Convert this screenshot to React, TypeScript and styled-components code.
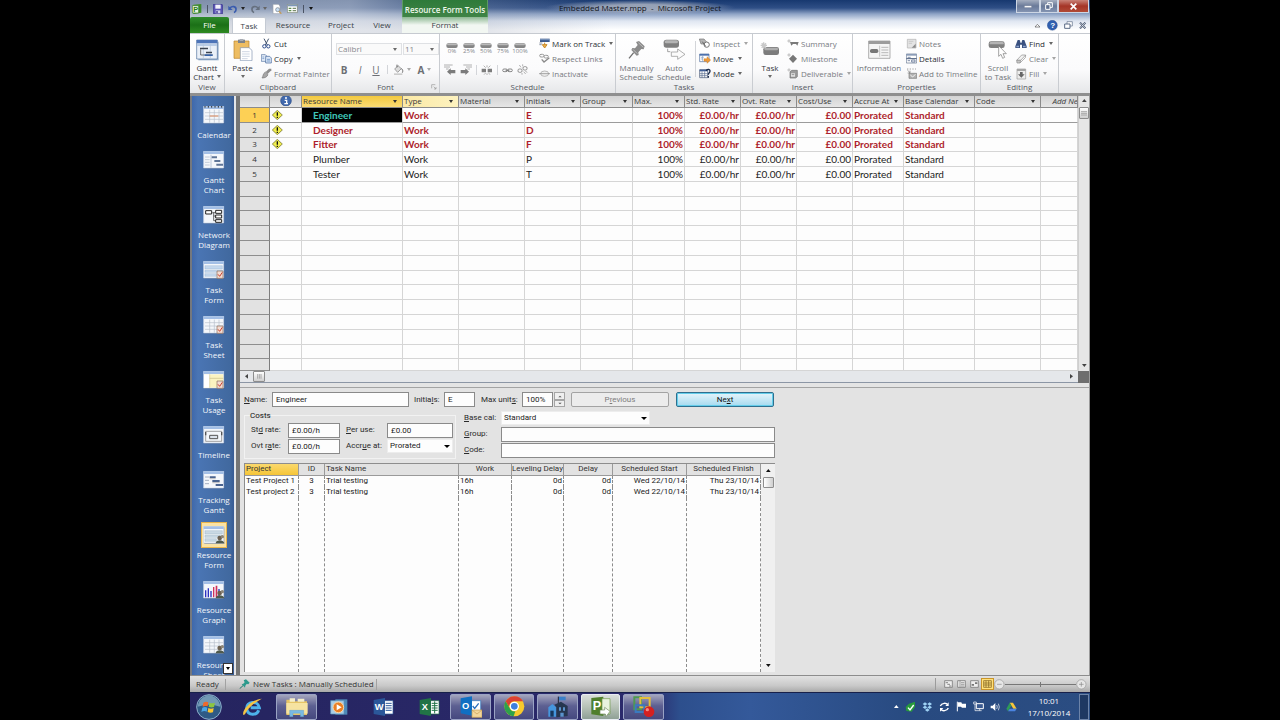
import React from "react";
import styled, { createGlobalStyle, css } from "styled-components";

const UI = `"Open Sans", "Noto Sans", sans-serif`;
const FORM = `Roboto, "Liberation Sans", sans-serif`;
const GRID = `Lato, "Open Sans", sans-serif`;

const GlobalStyle = createGlobalStyle`
  * { box-sizing: border-box; }
  html, body { margin: 0; background: #000; }
  body { font-family: ${UI}; font-size: 8px; line-height: 10px; color: #222; }
  button, input, select { font: inherit; color: inherit; margin: 0; padding: 0; border: 0; border-radius: 0; background: none; outline: none; }
  svg { display: block; flex: none; }
`;

const Stage = styled.div`
  display: flex;
  flex-direction: column;
  height: 100vh;
  min-height: 600px;
  padding: 0 190px;
  overflow: hidden;
`;

/* ---------- icons ---------- */

type IconProps = { w: number; h: number; children: React.ReactNode };
const Icon = ({ w, h, children }: IconProps) => (
  <svg width={w} height={h} viewBox={`0 0 ${w * 3} ${h * 3}`} aria-hidden="true">{children}</svg>
);

const Caret = styled.i<{ $color?: string }>`
  flex: none;
  width: 0;
  height: 0;
  border: 2px solid transparent;
  border-top: 3px solid ${p => p.$color || "#6a6a6a"};
  border-bottom: 0;
`;

const ProjectLogo = () => (
  <Icon w={10} h={10}>
    <path d="M4 2L28 0V26L4 30Z" fill="#3f8f2a" />
    <path d="M1 5H20V27H1Z" fill="#e9f3df" stroke="#2f7a1c" strokeWidth="2" />
    <text x="4" y="24" fontSize="22" fontWeight="700" fill="#2b7a18" fontFamily="Liberation Sans">P</text>
  </Icon>
);
const SaveIcon = () => (
  <Icon w={10} h={10}>
    <path d="M1 1H27L29 3V29H1Z" fill="#5b56b5" stroke="#35318a" strokeWidth="2" />
    <path d="M7 2H23V14H7Z" fill="#f2f3fb" />
    <path d="M8 19H22V28H8Z" fill="#cfd0ea" />
    <path d="M10 21H14V28H10Z" fill="#35318a" />
  </Icon>
);
const UndoIcon = ({ color, flip }: { color: string; flip?: boolean }) => (
  <Icon w={10} h={10}>
    <g transform={flip ? "translate(30 0) scale(-1 1)" : undefined}>
      <path d="M6 12C12 5 25 6 24 17C24 21 21 24 18 26" fill="none" stroke={color} strokeWidth="5" />
      <path d="M1 5V18H14Z" fill={color} />
    </g>
  </Icon>
);
const PreviewIcon = () => (
  <Icon w={10} h={10}>
    <path d="M3 1H19L24 6V29H3Z" fill="#fff" stroke="#9aa0aa" strokeWidth="2" />
    <circle cx="17" cy="17" r="6" fill="#c9e0f5" stroke="#6d7782" strokeWidth="2" />
    <path d="M21 22L28 29" stroke="#c49a56" strokeWidth="4" />
  </Icon>
);
const ViewTableIcon = () => (
  <Icon w={11} h={9}>
    <path d="M1 1H31V26H1Z" fill="#fff" stroke="#6f7a68" strokeWidth="2" />
    <path d="M2 2H30V7H2Z" fill="#7d97b8" />
    <path d="M5 11H13V15H5ZM5 18H13V22H5Z" fill="#5c8f4c" />
    <path d="M17 11H27V15H17ZM17 18H27V22H17Z" fill="#7c8f6f" />
  </Icon>
);

const GanttBig = () => (
  <Icon w={23} h={22}>
    <path d="M7 8H68V64H7Z" fill="#9db4cf" />
    <path d="M2 3H64V60H2Z" fill="#eaf0f8" stroke="#4f6f9d" strokeWidth="2" />
    <path d="M2 3H64V13H2Z" fill="#4d74b8" />
    <path d="M3 14H63V21H3Z" fill="#b9cce6" />
    <path d="M22 14V59M43 14V59" stroke="#b5c5da" strokeWidth="2" />
    <path d="M12 26H36V31H12ZM30 38H48V43H30Z" fill="#3d4450" />
    <path d="M14 31V48H50" stroke="#333" strokeWidth="2" fill="none" />
    <path d="M26 46H50V51H26Z" fill="#3863a8" />
  </Icon>
);
const PasteBig = () => (
  <Icon w={20} h={22}>
    <path d="M3 6H48V58H3Z" fill="#eebd62" stroke="#b9822c" strokeWidth="2" />
    <path d="M15 2H36V12H15Z" fill="#7d828a" />
    <path d="M20 0H31V6H20Z" fill="#a7abb2" />
    <path d="M22 26H48L57 34V65H22Z" fill="#fff" stroke="#7e93b0" strokeWidth="2" />
    <path d="M27 38H50M27 45H50M27 52H50M27 59H44" stroke="#b7c3d4" strokeWidth="2" />
  </Icon>
);
const CutIcon = () => (
  <Icon w={11} h={11}>
    <path d="M9 2L19 21M23 2L13 21" stroke="#44546e" strokeWidth="3" />
    <circle cx="10" cy="25" r="5" fill="none" stroke="#2b4a8c" strokeWidth="3" />
    <circle cx="22" cy="25" r="5" fill="none" stroke="#2b4a8c" strokeWidth="3" />
  </Icon>
);
const CopyIcon = () => (
  <Icon w={11} h={11}>
    <path d="M1 5H13L17 9V25H1Z" fill="#eaf1fa" stroke="#4c6c9d" strokeWidth="2" />
    <path d="M14 10H26L31 15V30H14Z" fill="#dce8f7" stroke="#3c5f97" strokeWidth="2" />
    <path d="M18 19H27M18 24H27M4 12H10M4 17H10" stroke="#4a78ba" strokeWidth="2" />
  </Icon>
);
const PainterIcon = () => (
  <Icon w={11} h={11}>
    <path d="M31 2L24 2L14 12L20 18L31 7Z" fill="#8d8d8d" />
    <path d="M13 12L21 20C18 27 12 30 3 30C7 25 5 17 13 12Z" fill="#a7a7a7" stroke="#7a7a7a" strokeWidth="2" />
  </Icon>
);
const BucketIcon = () => (
  <Icon w={11} h={11}>
    <path d="M5 15L15 5L25 14L14 25Z" fill="#ddd" stroke="#777" strokeWidth="2" />
    <path d="M12 10V2M25 14C30 16 30 22 28 26" stroke="#666" strokeWidth="3" fill="none" />
    <path d="M3 28H28V33H3Z" fill="#ccc" />
  </Icon>
);
const Pill = () => (
  <Icon w={12} h={5}>
    <rect x="1" y="1" width="34" height="14" rx="6" fill="#858585" />
    <rect x="3" y="2" width="30" height="5" rx="3" fill="#b9b9b9" />
  </Icon>
);
const IndentIcon = ({ flip }: { flip?: boolean }) => (
  <Icon w={12} h={11}>
    <g transform={flip ? "translate(36 0) scale(-1 1)" : undefined}>
      <path d="M0 3H26M0 9H18M6 15H14" stroke="#8d8d8d" strokeWidth="2" />
      <path d="M9 23L20 13V18H34V28H20V33Z" fill="#7b7b7b" />
    </g>
  </Icon>
);
const SplitIcon = () => (
  <Icon w={12} h={10}>
    <path d="M2 11H15V22H2ZM20 11H33V22H20Z" fill="#7d7d7d" />
    <path d="M14 8L8 2M18 7V1M22 8L28 2M14 24L9 29M18 25V30M22 24L28 29" stroke="#8c8c8c" strokeWidth="2" />
  </Icon>
);
const LinkIcon = () => (
  <Icon w={11} h={10}>
    <rect x="2" y="12" width="14" height="8" rx="4" fill="none" stroke="#8a8a8a" strokeWidth="3" />
    <rect x="17" y="12" width="14" height="8" rx="4" fill="none" stroke="#8a8a8a" strokeWidth="3" />
    <path d="M11 16H22" stroke="#777" strokeWidth="3" />
  </Icon>
);
const UnlinkIcon = () => (
  <Icon w={11} h={11}>
    <rect x="3" y="15" width="12" height="10" rx="4" fill="none" stroke="#909090" strokeWidth="3" />
    <rect x="18" y="8" width="12" height="10" rx="4" fill="none" stroke="#909090" strokeWidth="3" />
    <path d="M12 10L7 3M17 7V1M20 23L26 30M15 27V32M25 22L31 25" stroke="#8c8c8c" strokeWidth="2" />
  </Icon>
);
const MarkIcon = () => (
  <Icon w={11} h={11}>
    <path d="M3 2H32V12H3Z" fill="#3d5a8d" />
    <path d="M3 5H32" stroke="#9fb6d8" strokeWidth="2" />
    <path d="M17 14V20M10 20L17 30L24 20Z" stroke="#c98a2a" strokeWidth="3" fill="#f0b650" />
    <path d="M1 15H10M1 20H8" stroke="#56657c" strokeWidth="2" />
  </Icon>
);
const RespectIcon = () => (
  <Icon w={11} h={11}>
    <rect x="2" y="4" width="13" height="8" rx="4" fill="none" stroke="#999" strokeWidth="3" />
    <rect x="15" y="7" width="13" height="8" rx="4" fill="none" stroke="#999" strokeWidth="3" />
    <path d="M8 19L15 27L31 14" stroke="#8a8a8a" strokeWidth="4" fill="none" />
  </Icon>
);
const InactivateIcon = () => (
  <Icon w={11} h={11}>
    <ellipse cx="17" cy="17" rx="12" ry="8" fill="#f0f0f0" stroke="#9b9b9b" strokeWidth="2" />
    <path d="M0 17H33" stroke="#7b7b7b" strokeWidth="2" />
  </Icon>
);
const PinBig = () => (
  <Icon w={18} h={20}>
    <path d="M24 6L33 3L50 19L47 28L40 27L31 37L32 45L26 47L10 30L13 24L21 25L29 15Z" fill="#8b8b8b" />
    <path d="M31 8L46 22M15 28L28 41" stroke="#bdbdbd" strokeWidth="3" />
    <path d="M17 38L3 55" stroke="#6f6f6f" strokeWidth="4" />
  </Icon>
);
const AutoBig = () => (
  <Icon w={23} h={21}>
    <rect x="2" y="2" width="46" height="24" rx="8" fill="#7f7f7f" />
    <rect x="5" y="4" width="40" height="9" rx="5" fill="#b4b4b4" />
    <path d="M14 29V38H22" stroke="#777" strokeWidth="2" fill="none" />
    <path d="M25 39H44V30L66 46L44 61V52H25Z" fill="#fbfbfb" stroke="#8b8b8b" strokeWidth="2" />
  </Icon>
);
const InspectIcon = () => (
  <Icon w={12} h={11}>
    <path d="M1 3H15L22 11L15 18H6Z" fill="#b3b3b3" stroke="#777" strokeWidth="2" />
    <circle cx="23" cy="20" r="8" fill="none" stroke="#777" strokeWidth="3" />
    <path d="M10 11L20 25" stroke="#666" strokeWidth="3" />
  </Icon>
);
const MoveIcon = () => (
  <Icon w={12} h={11}>
    <path d="M2 3H30V26H2Z" fill="#fff" stroke="#49689b" strokeWidth="2" />
    <path d="M2 3H30V8H2Z" fill="#4c70ad" />
    <path d="M6 13H14M6 18H12M11 8V26" stroke="#7d98c2" strokeWidth="2" />
    <path d="M15 17H24V11L35 21L24 31V25H15Z" fill="#ee9a3a" stroke="#c26c10" />
  </Icon>
);
const ModeIcon = () => (
  <Icon w={12} h={11}>
    <path d="M2 5H26V29H2Z" fill="#fff" stroke="#3c4d6e" strokeWidth="2" />
    <path d="M2 5H26V10H2Z" fill="#3f5e97" />
    <path d="M2 17H26M2 23H26M9 10V29M17 10V29" stroke="#56698c" strokeWidth="2" />
    <path d="M22 9C23 2 34 3 33 10C33 14 28 15 28 20M28 24V29" stroke="#1c2c4b" strokeWidth="4" fill="none" />
  </Icon>
);
const TaskBig = () => (
  <Icon w={20} h={18}>
    <rect x="10" y="18" width="47" height="24" rx="7" fill="#7c7c7c" />
    <rect x="13" y="20" width="41" height="8" rx="4" fill="#adadad" />
    <path d="M11 4V23M2 13H21M5 7L18 20M18 7L5 20" stroke="#c9c9c9" strokeWidth="4" />
  </Icon>
);
const SummaryIcon = () => (
  <Icon w={12} h={11}>
    <path d="M9 12H35L31 23L27 18H18L13 23Z" fill="#7a7a7a" />
    <path d="M6 4V14M1 9H11" stroke="#bbb" strokeWidth="3" />
  </Icon>
);
const MilestoneIcon = () => (
  <Icon w={12} h={11}>
    <path d="M18 5L30 17L18 30L6 17Z" fill="#777" />
    <path d="M6 1V11M1 6H11" stroke="#bbb" strokeWidth="3" />
  </Icon>
);
const DeliverableIcon = () => (
  <Icon w={12} h={11}>
    <path d="M9 12L14 7H31V26L26 30H9Z" fill="#9b9b9b" stroke="#707070" strokeWidth="2" />
    <path d="M12 16H24V26H12Z" fill="#e8e8e8" />
    <path d="M14 20H22" stroke="#666" strokeWidth="2" />
    <path d="M6 1V11M1 6H11" stroke="#bbb" strokeWidth="3" />
  </Icon>
);
const InfoBig = () => (
  <Icon w={23} h={19}>
    <path d="M2 3H66V55H2Z" fill="#f5f5f5" stroke="#8b8b8b" strokeWidth="2" />
    <path d="M2 3H66V12H2Z" fill="#9c9c9c" />
    <rect x="6" y="27" width="25" height="12" rx="5" fill="#777" />
    <path d="M35 17V50" stroke="#aaa" strokeWidth="2" />
    <path d="M40 22H61M40 30H61M40 38H61M40 46H61" stroke="#999" strokeWidth="2" />
  </Icon>
);
const NotesIcon = () => (
  <Icon w={11} h={11}>
    <path d="M4 4H30V30H4Z" fill="#e4e4e4" stroke="#b0b0b0" strokeWidth="2" />
    <path d="M17 29H29V17Z" fill="#8a8a8a" />
    <path d="M8 10H22M8 16H18" stroke="#bbb" strokeWidth="2" />
  </Icon>
);
const DetailsIcon = () => (
  <Icon w={11} h={11}>
    <path d="M1 3H32V30H1Z" fill="#fff" stroke="#5b6d89" strokeWidth="2" />
    <path d="M1 3H32V8H1Z" fill="#8b9cb8" />
    <path d="M1 17H32" stroke="#47597a" strokeWidth="3" />
    <path d="M5 13H14M5 23H12" stroke="#3f547c" strokeWidth="2" />
    <path d="M17 21H27V27H17Z" fill="none" stroke="#3f547c" strokeWidth="2" />
  </Icon>
);
const TimelineAddIcon = () => (
  <Icon w={11} h={11}>
    <path d="M3 3H30" stroke="#777" strokeWidth="2" strokeDasharray="4 4" />
    <path d="M4 6L12 14M12 8V15H5" stroke="#777" strokeWidth="2" fill="none" />
    <path d="M9 16H32V31H9Z" fill="#b1b1b1" stroke="#787878" strokeWidth="2" />
    <path d="M13 21L20 27L28 19" stroke="#f4f4f4" strokeWidth="3" fill="none" />
  </Icon>
);
const ScrollBig = () => (
  <Icon w={20} h={19}>
    <rect x="2" y="4" width="48" height="20" rx="7" fill="#808080" />
    <rect x="5" y="6" width="42" height="7" rx="4" fill="#b4b4b4" />
    <path d="M32 17V49L39 43L44 55L50 52L45 41H55Z" fill="#fff" stroke="#777" strokeWidth="2" />
  </Icon>
);
const FindIcon = () => (
  <Icon w={12} h={10}>
    <path d="M8 3H14L17 12L19 12L22 3H28L35 22V27H21V17H15V27H1V22Z" fill="#3a5180" />
    <path d="M4 20H12V25H4ZM24 20H32V25H24Z" fill="#8fa6cf" />
  </Icon>
);
const ClearIcon = () => (
  <Icon w={11} h={10}>
    <path d="M2 19L17 3H29L14 19Z" fill="#f3f3f3" stroke="#8d8d8d" strokeWidth="2" />
    <path d="M2 19H14L12 27H3Z" fill="#c9c9c9" stroke="#8d8d8d" strokeWidth="2" />
    <path d="M12 27L28 11L29 3" fill="none" stroke="#8d8d8d" strokeWidth="2" />
  </Icon>
);
const FillIcon = () => (
  <Icon w={11} h={12}>
    <path d="M3 3H29V33H3Z" fill="#ececec" stroke="#999" strokeWidth="2" />
    <path d="M3 3H29V9H3Z" fill="#a5a5a5" />
    <path d="M12 12H20V19H26L16 29L6 19H12Z" fill="#666" />
  </Icon>
);

/* ---------- title bar and tabs ---------- */

const Header = styled.header`
  position: relative;
  flex: none;
  background:
    linear-gradient(to right, rgba(196, 200, 208, 0.6) 0, rgba(205, 210, 220, 0.6) 160px, rgba(150, 160, 180, 0.35) 260px, rgba(255, 255, 255, 0) 420px),
    linear-gradient(to bottom, #17386f 0, #2f4f86 8px, #8fa4c6 14px, #dfe6f1 21px, #fff 30px);
`;
const TitleRow = styled.div`
  display: flex;
  height: 17px;
`;
const QuickAccess = styled.div`
  display: flex;
  align-items: center;
  gap: 5px;
  width: 212px;
  padding: 0 2px;
`;
const QatButton = styled.button`
  display: flex;
  align-items: center;
  gap: 3px;
`;
const QatRule = styled.span`
  width: 1px;
  height: 8px;
  background: #4a5364;
`;
const ContextTitle = styled.div`
  width: 86px;
  padding-top: 5px;
  text-align: center;
  white-space: nowrap;
  font-weight: 600;
  color: #eef7ea;
  background: linear-gradient(to bottom, #2e7a3a, #3f8446);
  border: solid #5d9a63;
  border-width: 0 1px;
`;
const WindowTitle = styled.div`
  position: absolute;
  inset: 3px 0 auto;
  text-align: center;
  color: #10131a;
  pointer-events: none;
  span {
    padding: 2px 14px;
    background: radial-gradient(closest-side, rgba(178, 184, 196, 0.8) 40%, rgba(170, 178, 192, 0));
  }
`;
const WindowButtons = styled.div`
  display: flex;
  height: 13px;
  margin-left: auto;
  padding-right: 1px;
`;
const WindowButton = styled.button<{ $w: number; $close?: boolean }>`
  display: flex;
  align-items: center;
  justify-content: center;
  width: ${p => p.$w}px;
  border: 1px solid #cdd6e4;
  border-top: 0;
  background: ${p => (p.$close ? "linear-gradient(to bottom, #c98378, #a53527 50%, #b04a36)" : "linear-gradient(to bottom, #a6afc0, #6a7a99 50%, #8494b2)")};
`;
const TabRow = styled.nav`
  display: flex;
  height: 16px;
  align-items: stretch;
`;
const Tab = styled.button<{ $w: number; $kind?: "file" | "active" | "context" }>`
  width: ${p => p.$w}px;
  text-align: center;
  color: #3a3f48;
  ${p => p.$kind === "file" && css`
    margin-right: 3px;
    color: #fff;
    border-radius: 2px 2px 0 0;
    background: linear-gradient(to bottom, #2f8b2b, #1b7017 50%, #2f8a22);
  `}
  ${p => p.$kind === "active" && css`
    background: #fff;
    border: 1px solid #c4cad3;
    border-bottom: 0;
    border-radius: 2px 2px 0 0;
  `}
  ${p => p.$kind === "context" && css`
    background: linear-gradient(to bottom, #8db893, #f2f7f2 50%);
  `}
`;
const TabTools = styled.div`
  display: flex;
  align-items: center;
  gap: 6px;
  margin-left: auto;
  padding-right: 3px;
`;
const PlainButton = styled.button`
  display: flex;
  align-items: center;
`;

const TitleBar = () => (
  <Header>
    <TitleRow>
      <QuickAccess>
        <ProjectLogo />
        <QatRule />
        <QatButton aria-label="Save"><SaveIcon /></QatButton>
        <QatButton aria-label="Undo"><UndoIcon color="#3a5cae" /><Caret $color="#222" /></QatButton>
        <QatButton aria-label="Redo"><UndoIcon color="#66707f" flip /><Caret $color="#666" /></QatButton>
        <QatButton aria-label="Print preview"><PreviewIcon /></QatButton>
        <QatButton aria-label="View"><ViewTableIcon /></QatButton>
        <QatRule />
        <QatButton aria-label="Customize"><Caret $color="#111" /></QatButton>
      </QuickAccess>
      <ContextTitle>Resource Form Tools</ContextTitle>
      <WindowButtons>
        <WindowButton $w={24} aria-label="Minimize"><Icon w={8} h={3}><path d="M1 2H23V8H1Z" fill="#fff" stroke="#44526d" /></Icon></WindowButton>
        <WindowButton $w={18} aria-label="Restore">
          <Icon w={8} h={8}><path d="M8 2H22V16H8Z" fill="none" stroke="#fff" strokeWidth="3" /><path d="M2 8H15V22H2Z" fill="#5e6f90" stroke="#fff" strokeWidth="3" /></Icon>
        </WindowButton>
        <WindowButton $w={31} $close aria-label="Close"><Icon w={7} h={7}><path d="M2 2L19 19M19 2L2 19" stroke="#fff" strokeWidth="5" /></Icon></WindowButton>
      </WindowButtons>
    </TitleRow>
    <WindowTitle><span>Embedded Master.mpp&nbsp; -&nbsp; Microsoft Project</span></WindowTitle>
    <TabRow>
      <Tab $w={39} $kind="file">File</Tab>
      <Tab $w={34} $kind="active">Task</Tab>
      <Tab $w={54}>Resource</Tab>
      <Tab $w={42}>Project</Tab>
      <Tab $w={40}>View</Tab>
      <Tab $w={86} $kind="context">Format</Tab>
      <TabTools>
        <PlainButton aria-label="Collapse ribbon"><Icon w={7} h={5}><path d="M3 12L10 4L18 12Z" fill="#fff" stroke="#555" strokeWidth="2" /></Icon></PlainButton>
        <PlainButton aria-label="Help">
          <Icon w={11} h={11}>
            <circle cx="16" cy="16" r="15" fill="#2f5fb0" stroke="#1f3f80" />
            <text x="10" y="25" fontSize="24" fontWeight="700" fill="#fff" fontFamily="Liberation Sans">?</text>
          </Icon>
        </PlainButton>
        <PlainButton aria-label="Restore document"><Icon w={9} h={8}><path d="M9 2H25V15H9Z" fill="#fff" stroke="#5b6b85" strokeWidth="2" /><path d="M2 9H18V22H2Z" fill="#fff" stroke="#5b6b85" strokeWidth="3" /></Icon></PlainButton>
        <PlainButton aria-label="Close document"><Icon w={8} h={7}><path d="M3 2L19 19M19 2L3 19" stroke="#43536e" strokeWidth="6" /><path d="M3 2L19 19M19 2L3 19" stroke="#fff" strokeWidth="2" /></Icon></PlainButton>
      </TabTools>
    </TabRow>
  </Header>
);

/* ---------- ribbon ---------- */

const RibbonBar = styled.div`
  display: flex;
  flex: none;
  height: 63px;
  overflow: hidden;
  border-top: 1px solid #c6cad0;
  border-bottom: 3px solid #8f8f8f;
  background: linear-gradient(to bottom, #fff 0, #fbfbfc 60%, #e6e7e9 100%);
`;
const Group = styled.section<{ $w: number }>`
  display: flex;
  flex-direction: column;
  flex: none;
  width: ${p => p.$w}px;
  border-right: 1px solid #c9ccd1;
`;
const GroupBody = styled.div`
  display: flex;
  flex: 1;
  padding-top: 2px;
`;
const GroupLabel = styled.div`
  display: flex;
  justify-content: center;
  position: relative;
  height: 11px;
  color: #54585f;
  svg { position: absolute; right: 2px; top: 2px; }
`;
const BigButton = styled.button<{ $w: number; $dim?: boolean }>`
  display: flex;
  flex-direction: column;
  align-items: center;
  flex: none;
  width: ${p => p.$w}px;
  height: 46px;
  line-height: 9px;
  white-space: nowrap;
  color: ${p => (p.$dim ? "#6f7277" : "#33363b")};
  > span:first-child {
    display: flex;
    align-items: center;
    height: 27px;
  }
  > span:nth-child(2) { text-align: center; }
  > i { margin-top: 3px; }
`;
const Stack = styled.div`
  display: flex;
  flex-direction: column;
`;
const SmallButton = styled.button<{ $dim?: boolean }>`
  display: flex;
  align-items: center;
  gap: 2px;
  height: 15px;
  white-space: nowrap;
  color: ${p => (p.$dim ? "#777a7f" : "#2a2d33")};
  > span:first-child {
    display: flex;
    justify-content: center;
    width: 12px;
  }
  > i { margin-left: 2px; }
`;
const Small = ({ icon, label, dim, menu }: { icon: React.ReactNode; label: string; dim?: boolean; menu?: boolean }) => (
  <SmallButton $dim={dim}>
    <span>{icon}</span>
    <span>{label}</span>
    {menu && <Caret $color={dim ? "#a5a5a5" : "#666"} />}
  </SmallButton>
);
const InlineCaret = styled(Caret)`
  display: inline-block;
  margin: 0 0 2px 3px;
`;
const FontTools = styled.div`
  padding: 7px 0 0 4px;
`;
const ComboRow = styled.div`
  display: flex;
  gap: 1px;
`;
const Combo = styled.span<{ $w: number }>`
  position: relative;
  width: ${p => p.$w}px;
  height: 12px;
  border: 1px solid #dfe1e4;
  background: #fafafa;
  color: #85888d;
  select {
    display: block;
    appearance: none;
    width: 100%;
    height: 10px;
    line-height: 10px;
    padding-left: 1px;
  }
  i { position: absolute; right: 4px; top: 4px; pointer-events: none; }
`;
const FormatRow = styled.div`
  display: flex;
  align-items: center;
  height: 13px;
  margin-top: 8px;
  color: #6d6f74;
`;
const FormatButton = styled.button<{ $w?: number }>`
  display: flex;
  align-items: center;
  justify-content: center;
  gap: 3px;
  width: ${p => p.$w || 16}px;
  font-size: 10px;
`;
const Rule = styled.span<{ $h: number }>`
  flex: none;
  width: 1px;
  height: ${p => p.$h}px;
  background: #d3d5d9;
`;
const ScheduleTools = styled.div`
  display: flex;
  flex-direction: column;
  gap: 9px;
  width: 98px;
  padding: 7px 10px 0 4px;
`;
const ToolRow = styled.div`
  display: flex;
  align-items: center;
  justify-content: space-between;
`;
const PercentButton = styled.button`
  display: flex;
  flex-direction: column;
  align-items: center;
  width: 16px;
  font-size: 6px;
  line-height: 7px;
  color: #85888d;
`;

const Ribbon = () => (
  <RibbonBar>
    <Group $w={35}>
      <GroupBody><BigButton $w={34}><span><GanttBig /></span><span>Gantt<br />Chart<InlineCaret /></span></BigButton></GroupBody>
      <GroupLabel>View</GroupLabel>
    </Group>
    <Group $w={107}>
      <GroupBody>
        <BigButton $w={35}><span><PasteBig /></span><span>Paste</span><Caret /></BigButton>
        <Stack>
          <Small icon={<CutIcon />} label="Cut" />
          <Small icon={<CopyIcon />} label="Copy" menu />
          <Small icon={<PainterIcon />} label="Format Painter" dim />
        </Stack>
      </GroupBody>
      <GroupLabel>Clipboard</GroupLabel>
    </Group>
    <Group $w={108}>
      <GroupBody>
        <FontTools>
          <ComboRow>
            <Combo $w={66}><select aria-label="Font"><option>Calibri</option></select><Caret /></Combo>
            <Combo $w={36}><select aria-label="Font size"><option>11</option></select><Caret /></Combo>
          </ComboRow>
          <FormatRow>
            <FormatButton aria-label="Bold"><b>B</b></FormatButton>
            <FormatButton aria-label="Italic"><em>I</em></FormatButton>
            <FormatButton aria-label="Underline"><u>U</u></FormatButton>
            <FormatButton $w={6} as="span"><Rule $h={9} /></FormatButton>
            <FormatButton $w={23} aria-label="Fill colour"><BucketIcon /><Caret $color="#aaa" /></FormatButton>
            <FormatButton $w={23} aria-label="Font colour"><b>A</b><Caret $color="#aaa" /></FormatButton>
          </FormatRow>
        </FontTools>
      </GroupBody>
      <GroupLabel>Font<Icon w={6} h={6}><path d="M2 13V2H13M8 8L15 15M15 9V15H9" stroke="#999" strokeWidth="2" fill="none" /></Icon></GroupLabel>
    </Group>
    <Group $w={176}>
      <GroupBody>
        <ScheduleTools>
          <ToolRow>
            {["0%", "25%", "50%", "75%", "100%"].map(t => <PercentButton key={t}><Pill />{t}</PercentButton>)}
          </ToolRow>
          <ToolRow>
            <PlainButton aria-label="Outdent"><IndentIcon /></PlainButton>
            <PlainButton aria-label="Indent"><IndentIcon flip /></PlainButton>
            <Rule $h={10} />
            <PlainButton aria-label="Split"><SplitIcon /></PlainButton>
            <Rule $h={10} />
            <PlainButton aria-label="Link"><LinkIcon /></PlainButton>
            <PlainButton aria-label="Unlink"><UnlinkIcon /></PlainButton>
          </ToolRow>
        </ScheduleTools>
        <Stack>
          <Small icon={<MarkIcon />} label="Mark on Track" menu />
          <Small icon={<RespectIcon />} label="Respect Links" dim />
          <Small icon={<InactivateIcon />} label="Inactivate" dim />
        </Stack>
      </GroupBody>
      <GroupLabel>Schedule</GroupLabel>
    </Group>
    <Group $w={137}>
      <GroupBody>
        <BigButton $w={41} $dim><span><PinBig /></span><span>Manually<br />Schedule</span></BigButton>
        <BigButton $w={34} $dim><span><AutoBig /></span><span>Auto<br />Schedule</span></BigButton>
        <FormatButton $w={8} as="span"><Rule $h={36} /></FormatButton>
        <Stack>
          <Small icon={<InspectIcon />} label="Inspect" dim menu />
          <Small icon={<MoveIcon />} label="Move" menu />
          <Small icon={<ModeIcon />} label="Mode" menu />
        </Stack>
      </GroupBody>
      <GroupLabel>Tasks</GroupLabel>
    </Group>
    <Group $w={100}>
      <GroupBody>
        <BigButton $w={34}><span><TaskBig /></span><span>Task</span><Caret /></BigButton>
        <Stack>
          <Small icon={<SummaryIcon />} label="Summary" dim />
          <Small icon={<MilestoneIcon />} label="Milestone" dim />
          <Small icon={<DeliverableIcon />} label="Deliverable" dim menu />
        </Stack>
      </GroupBody>
      <GroupLabel>Insert</GroupLabel>
    </Group>
    <Group $w={128}>
      <GroupBody>
        <BigButton $w={52} $dim><span><InfoBig /></span><span>Information</span></BigButton>
        <Stack>
          <Small icon={<NotesIcon />} label="Notes" dim />
          <Small icon={<DetailsIcon />} label="Details" />
          <Small icon={<TimelineAddIcon />} label="Add to Timeline" dim />
        </Stack>
      </GroupBody>
      <GroupLabel>Properties</GroupLabel>
    </Group>
    <Group $w={78}>
      <GroupBody>
        <BigButton $w={34} $dim><span><ScrollBig /></span><span>Scroll<br />to Task</span></BigButton>
        <Stack>
          <Small icon={<FindIcon />} label="Find" menu />
          <Small icon={<ClearIcon />} label="Clear" dim menu />
          <Small icon={<FillIcon />} label="Fill" dim menu />
        </Stack>
      </GroupBody>
      <GroupLabel>Editing</GroupLabel>
    </Group>
  </RibbonBar>
);

/* ---------- view bar ---------- */

const Workspace = styled.main`
  display: flex;
  flex: 1;
  min-height: 0;
`;
const ViewBar = styled.nav`
  position: relative;
  display: flex;
  flex-direction: column;
  flex: none;
  width: 50px;
  padding-top: 10px;
  overflow: hidden;
  color: #f3f6fb;
  background: linear-gradient(to right, #75787d 2px, #3f68ab 2px, #4a75b4 8px, #41699f 40px, #375a93 44px, #e2e4e8 44px, #e2e4e8 46px, #757575 46px);
`;
const ViewButton = styled.button`
  display: flex;
  flex-direction: column;
  align-items: center;
  flex: none;
  width: 48px;
  margin-bottom: 11px;
  line-height: 10px;
`;
const ViewIcon = styled.span<{ $on?: boolean }>`
  display: flex;
  align-items: center;
  justify-content: center;
  width: 26px;
  height: 26px;
  margin: -4px 0 2px;
  ${p => p.$on && css`
    background: #fbe3a4;
    border: 1px solid #e9b54c;
  `}
`;
const ViewMore = styled.button`
  position: absolute;
  right: 7px;
  bottom: 1px;
  display: flex;
  align-items: center;
  justify-content: center;
  width: 10px;
  height: 11px;
  background: #fff;
  border: 1px solid #333;
`;

const Frame = ({ children }: { children: React.ReactNode }) => (
  <Icon w={22} h={18}>
    <path d="M4 4H64V54H4Z" fill="#35527f" opacity="0.5" />
    <path d="M2 1H62V51H2Z" fill="#f4f7fb" stroke="#c9d6e8" strokeWidth="2" />
    <path d="M2 1H62V9H2Z" fill="#a3bfe6" />
    {children}
  </Icon>
);
const gridLines = <path d="M6 20H60M6 30H60M6 40H60M20 11V50M34 11V50M48 11V50" stroke="#b6bfcc" strokeWidth="2" />;
const clip = <g><path d="M42 30H60V52H42Z" fill="#f5dcd2" stroke="#8a6a58" strokeWidth="2" /><path d="M45 40L50 46L58 34" stroke="#c8402a" strokeWidth="3" fill="none" /></g>;
const people = <g><circle cx="50" cy="36" r="7" fill="#6b6050" /><circle cx="58" cy="32" r="5" fill="#8c8577" /><path d="M38 52C38 40 62 40 64 52Z" fill="#4f5a4c" /></g>;

const views: { label: string[]; art: React.ReactNode; on?: boolean }[] = [
  { label: ["Calendar"], art: <>{gridLines}<path d="M6 -1V5M16 -1V5M26 -1V5M36 -1V5M46 -1V5M56 -1V5" stroke="#333" strokeWidth="3" /><path d="M20 30H46" stroke="#e08a5a" strokeWidth="3" /></> },
  { label: ["Gantt", "Chart"], art: <><path d="M6 18H20M6 26H20M6 34H20M6 42H20" stroke="#a9b6c8" strokeWidth="2" /><path d="M24 11V50" stroke="#9fb0c8" strokeWidth="2" /><path d="M26 16H42V22H26ZM34 27H52V33H34ZM40 38H60V44H40Z" fill="#5f7698" /></> },
  { label: ["Network", "Diagram"], art: <><path d="M28 20H36M32 20V44H40M40 30H32" stroke="#222" strokeWidth="2" fill="none" /><path d="M8 14H26V24H8ZM38 13H56V22H38ZM38 27H56V36H38ZM38 41H56V49H38Z" fill="#fff" stroke="#222" strokeWidth="3" /></> },
  { label: ["Task", "Form"], art: <><path d="M6 14H58V24H6ZM6 28H58V34H6ZM6 38H40V46H6Z" fill="#c4d8ee" stroke="#8aa6c8" />{clip}</> },
  { label: ["Task", "Sheet"], art: <>{gridLines}{clip}</> },
  { label: ["Task", "Usage"], art: <><path d="M3 10H61V50H3Z" fill="#fbf3c0" /><path d="M20 10V50M3 22H61" stroke="#c9bd86" strokeWidth="2" /><path d="M3 10H19V50H3Z" fill="#fff" />{clip}</> },
  { label: ["Timeline"], art: <><path d="M8 16H56V46H8Z" fill="none" stroke="#777" strokeWidth="2" /><path d="M8 18V28M56 18V28" stroke="#555" strokeWidth="4" /><path d="M20 28H44V38H20Z" fill="#dce3ec" stroke="#555" strokeWidth="3" /></> },
  { label: ["Tracking", "Gantt"], art: <><path d="M6 18H18M6 28H18M6 38H18" stroke="#7d8ca3" strokeWidth="2" /><path d="M20 16H38V21H20ZM28 27H50V33H28ZM38 39H60V45H38Z" fill="#4a6490" /><path d="M20 23H38M28 35H50" stroke="#999" strokeWidth="2" /></> },
  { label: ["Resource", "Form"], on: true, art: <><path d="M6 14H58V24H6ZM6 28H58V34H6ZM6 38H40V46H6Z" fill="#c9d9e4" stroke="#8aa6b8" />{people}</> },
  { label: ["Resource", "Graph"], art: <><path d="M6 28H10V49H6ZM14 22H18V49H14ZM22 30H26V49H22Z" fill="#2b2fc0" /><path d="M30 18H34V49H30ZM38 14H43V49H38Z" fill="#d0305a" /><path d="M46 24H50V49H46Z" fill="#2b2fc0" />{people}</> },
  { label: ["Resource", "Sheet"], art: <>{gridLines}{people}</> },
];

const Views = () => (
  <ViewBar>
    {views.map(v => (
      <ViewButton key={v.label.join(" ")}>
        <ViewIcon $on={v.on}><Frame>{v.art}</Frame></ViewIcon>
        {v.label.map(l => <span key={l}>{l}</span>)}
      </ViewButton>
    ))}
    <ViewMore aria-label="More views"><Caret $color="#000" /></ViewMore>
  </ViewBar>
);

/* ---------- resource sheet ---------- */

const Panes = styled.div`
  display: flex;
  flex-direction: column;
  flex: 1;
  min-width: 0;
  border-right: 1px solid #9a9a9a;
`;
const SheetPane = styled.section`
  display: grid;
  grid-template: minmax(0, 1fr) 12px / minmax(0, 1fr) 11px;
  flex: 1 1 50%;
  min-height: 0;
  background: #fdfdfd;
`;
const Sheet = styled.table`
  table-layout: fixed;
  width: 100%;
  height: 100%;
  border-spacing: 0;
  font-family: ${GRID};
  font-size: 10px;
  line-height: 12px;
  td, th { padding: 0; overflow: hidden; white-space: nowrap; }
`;
const HeadCell = styled.th<{ $fill?: string }>`
  height: 12px;
  font: 400 8px/10px ${UI};
  color: #3a3a3a;
  text-align: left;
  vertical-align: top;
  border-right: 1px solid #8b8b8b;
  border-bottom: 1px solid #8b8b8b;
  background: ${p => p.$fill || "linear-gradient(to bottom, #d3d3d3, #e6e6e6)"};
`;
const HeadInner = styled.div`
  display: flex;
  align-items: center;
  justify-content: space-between;
  height: 10px;
  padding: 0 5px 0 1px;
`;
const RowNumber = styled.th<{ $on?: boolean }>`
  font: 400 8px/12px ${UI};
  color: #333;
  background: ${p => (p.$on ? "#fdd055" : "#e2e2e2")};
  border-right: 1px solid #7d7d7d;
  border-bottom: 1px solid #8e8e8e;
`;
const Cell = styled.td<{ $right?: boolean; $indent?: boolean; $selected?: boolean }>`
  text-align: ${p => (p.$right ? "right" : "left")};
  border-right: 1px solid #d5d5d5;
  border-bottom: 1px solid #d5d5d5;
  && { padding: ${p => (p.$indent ? "0 0 0 11px" : "0 1px")}; }
  ${p => p.$selected && css`
    background: #000;
    color: #3fc6b8;
  `}
`;
const BodyRow = styled.tr<{ $alert?: boolean; $current?: boolean; $short?: boolean }>`
  height: ${p => (p.$short ? 11 : 14)}px;
  ${p => p.$alert && css`
    color: #ad1f2c;
    font-weight: 700;
  `}
  ${p => p.$current && css`
    ${Cell} { border-bottom-color: #9b9b9b; }
  `}
`;
const FlagBox = styled.div`
  display: flex;
  padding-left: 1px;
`;
const Center = styled.div`
  display: flex;
  justify-content: center;
`;

const Flag = () => (
  <Icon w={11} h={10}>
    <path d="M16 1L31 15L16 29L1 15Z" fill="#f1ee4e" stroke="#5f5c20" strokeWidth="2" />
    <path d="M16 7V17M16 20V24" stroke="#111" strokeWidth="4" />
  </Icon>
);
const InfoDot = () => (
  <Icon w={12} h={10}>
    <circle cx="18" cy="14" r="16" fill="#4169ad" stroke="#2c4b85" strokeWidth="2" />
    <circle cx="18" cy="6" r="3" fill="#fff" />
    <path d="M14 13H20V22M13 23H24" stroke="#fff" strokeWidth="4" fill="none" />
  </Icon>
);

const yellow = "linear-gradient(to bottom, #f3c93f, #fbdc74)";
const paleYellow = "linear-gradient(to right, #fbe9a6, #fdf2bf)";
const columns: { title: string; w?: number; fill?: string }[] = [
  { title: "Resource Name", w: 101, fill: yellow },
  { title: "Type", w: 56, fill: paleYellow },
  { title: "Material", w: 66 },
  { title: "Initials", w: 56 },
  { title: "Group", w: 52 },
  { title: "Max.", w: 52 },
  { title: "Std. Rate", w: 56 },
  { title: "Ovt. Rate", w: 56 },
  { title: "Cost/Use", w: 56 },
  { title: "Accrue At", w: 51 },
  { title: "Base Calendar", w: 71 },
  { title: "Code", w: 66 },
];
const resources = [
  { name: "Engineer", initial: "E", alert: true },
  { name: "Designer", initial: "D", alert: true },
  { name: "Fitter", initial: "F", alert: true },
  { name: "Plumber", initial: "P", alert: false },
  { name: "Tester", initial: "T", alert: false },
];

const VScroll = styled.div`
  display: flex;
  flex-direction: column;
  align-items: center;
  justify-content: space-between;
  padding: 2px 0 3px;
  background: #e6e6e6;
  border-left: 1px solid #cfcfcf;
`;
const Thumb = styled.span<{ $w: number; $h: number; $vertical?: boolean }>`
  display: flex;
  align-items: center;
  justify-content: center;
  width: ${p => p.$w}px;
  height: ${p => p.$h}px;
  border: 1px solid #8d8d8d;
  border-radius: 1px;
  background: linear-gradient(${p => (p.$vertical ? "to right" : "to bottom")}, #fff, #cfcfcf);
`;
const ScrollTop = styled.div`
  display: flex;
  flex-direction: column;
  align-items: center;
  gap: 4px;
`;
const HScroll = styled.div`
  display: flex;
  align-items: center;
  gap: 4px;
  padding: 0 4px 0 4px;
  background: #e5e7ea;
  border-bottom: 1px solid #8c96a5;
  > :last-child { margin-left: auto; }
`;
const Corner = styled.div`
  background: #6e6e6e;
`;
const Arrow = ({ dir, color = "#444" }: { dir: "up" | "down" | "left" | "right"; color?: string }) => {
  const d = { up: "M0 12L7 3L14 12Z", down: "M0 3L7 12L14 3Z", left: "M12 0L3 7L12 14Z", right: "M3 0L12 7L3 14Z" }[dir];
  return <Icon w={5} h={5}><path d={d} fill={color} /></Icon>;
};

const ResourceSheet = () => (
  <SheetPane>
    <Sheet>
      <colgroup>
        <col width={30} />
        <col width={32} />
        {columns.map(c => <col key={c.title} width={c.w} />)}
        <col />
      </colgroup>
      <thead>
        <tr>
          <HeadCell aria-label="Row" />
          <HeadCell aria-label="Indicators"><Center><InfoDot /></Center></HeadCell>
          {columns.map(c => (
            <HeadCell key={c.title} $fill={c.fill}><HeadInner>{c.title}<Caret $color="#333" /></HeadInner></HeadCell>
          ))}
          <HeadCell><HeadInner><em>&nbsp; &nbsp; &nbsp;Add New</em></HeadInner></HeadCell>
        </tr>
      </thead>
      <tbody>
        {resources.map((r, i) => (
          <BodyRow key={r.name} $alert={r.alert} $current={i === 0}>
            <RowNumber $on={i === 0}>{i + 1}</RowNumber>
            <Cell>{r.alert && <FlagBox><Flag /></FlagBox>}</Cell>
            <Cell $indent $selected={i === 0}>{r.name}</Cell>
            <Cell>Work</Cell>
            <Cell />
            <Cell>{r.initial}</Cell>
            <Cell />
            <Cell $right>100%</Cell>
            <Cell $right>£0.00/hr</Cell>
            <Cell $right>£0.00/hr</Cell>
            <Cell $right>£0.00</Cell>
            <Cell>Prorated</Cell>
            <Cell>Standard</Cell>
            <Cell />
            <Cell />
          </BodyRow>
        ))}
        {Array.from({ length: 13 }, (_, i) => (
          <BodyRow key={i} $short={i === 12}>
            <RowNumber />
            {Array.from({ length: 14 }, (_, j) => <Cell key={j} />)}
          </BodyRow>
        ))}
      </tbody>
    </Sheet>
    <VScroll>
      <ScrollTop>
        <Arrow dir="up" />
        <Thumb $w={10} $h={12}><Icon w={6} h={5}><path d="M0 2H18M0 7H18M0 12H18" stroke="#888" strokeWidth="2" /></Icon></Thumb>
      </ScrollTop>
      <Arrow dir="down" />
    </VScroll>
    <HScroll>
      <Arrow dir="left" />
      <Thumb $w={12} $h={11}><Icon w={5} h={5}><path d="M2 0V14M7 0V14M12 0V14" stroke="#888" strokeWidth="2" /></Icon></Thumb>
      <Arrow dir="right" />
    </HScroll>
    <Corner />
  </SheetPane>
);

/* ---------- resource form ---------- */

const Splitter = styled.div`
  flex: none;
  height: 5px;
  background: #e4e4e4;
  border-bottom: 1px solid #a3a3a3;
`;
const FormPane = styled.form`
  display: flex;
  flex-direction: column;
  flex: 1 1 50%;
  min-height: 0;
  padding: 4px 4px 3px;
  background: #e3e3e3;
  font-family: ${FORM};
`;
const FormRow = styled.div`
  display: flex;
  align-items: center;
  flex: none;
  height: 16px;
`;
const Label = styled.label<{ $w: number; $gap?: number }>`
  flex: none;
  width: ${p => p.$w}px;
  margin-left: ${p => p.$gap || 0}px;
  white-space: nowrap;
  color: #2a2a2a;
`;
const TextBox = styled.input<{ $w: number }>`
  width: ${p => p.$w}px;
  height: 15px;
  padding: 0 3px;
  background: #fdfdfd;
  border: 1px solid #8a8a8a;
`;
const SelectBox = styled.span<{ $w: number }>`
  position: relative;
  width: ${p => p.$w}px;
  height: 14px;
  background: #fdfdfd;
  border: 1px solid #ededed;
  select {
    display: block;
    appearance: none;
    width: 100%;
    height: 12px;
    padding-left: 2px;
  }
  i { position: absolute; right: 2px; top: 5px; border-width: 3px 3px 0; pointer-events: none; }
`;
const Spinner = styled.span`
  display: flex;
  flex-direction: column;
  width: 11px;
  height: 15px;
  margin-left: 1px;
`;
const SpinButton = styled.button`
  display: flex;
  flex: 1;
  align-items: center;
  justify-content: center;
  background: #efefef;
  border: 1px solid #a5a5a5;
`;
const FormButton = styled.button<{ $primary?: boolean; $gap: number }>`
  width: 98px;
  height: 15px;
  margin-left: ${p => p.$gap}px;
  border-radius: 2px;
  color: #7d7d7d;
  background: #ececec;
  border: 1px solid #a3a3a3;
  ${p => p.$primary && css`
    color: #111;
    border-color: #2f6f8e;
    box-shadow: inset 0 0 0 1px #63cdea;
    background: linear-gradient(to bottom, #e6f4fb, #c6e8f5 50%, #a5daf0);
  `}
`;
const FormBlocks = styled.div`
  display: flex;
  flex: none;
  align-items: flex-start;
  gap: 8px;
  margin: 3px 0 4px;
`;
const CostBox = styled.fieldset`
  display: grid;
  grid-template-columns: 37px 52px 47px 66px;
  row-gap: 1px;
  align-items: center;
  width: 212px;
  margin: 0;
  padding: 3px 0 4px 6px;
  border: 1px solid #f2f2f2;
  legend { padding: 0; margin-left: -1px; line-height: 9px; color: #111; }
`;
const DetailRows = styled.div`
  display: grid;
  grid-template-columns: 37px 274px;
  grid-auto-rows: 15px;
  row-gap: 1px;
  align-items: center;
`;
const TaskArea = styled.div`
  display: flex;
  flex: 1;
  min-height: 0;
  width: 531px;
  background: #fdfdfd;
  border-top: 1px solid #8d8d8d;
`;
const TaskTable = styled.table`
  table-layout: fixed;
  width: 516px;
  height: 100%;
  border-spacing: 0;
  border-left: 1px solid #8d8d8d;
  th, td { white-space: nowrap; overflow: hidden; }
  td { padding: 0 1px; }
  th {
    height: 12px;
    padding: 0;
    font-weight: 400;
    color: #333;
    background: #e2e2e2;
    border-right: 1px solid #9a9a9a;
    border-bottom: 1px solid #9a9a9a;
  }
  th:first-child { background: linear-gradient(to bottom, #fbd96d, #f5c537); }
  td { border-right: 1px dashed #8c8c8c; }
  tbody tr { height: 11px; }
  tbody tr:last-child { height: auto; }
`;
const TaskCell = styled.td<{ $align?: "center" | "right" | "left" }>`
  text-align: ${p => p.$align || "left"};
`;
const TaskHead = styled.th<{ $left?: boolean }>`
  text-align: ${p => (p.$left ? "left" : "center")};
  text-indent: ${p => (p.$left ? 1 : 0)}px;
`;
const TaskScroll = styled.div`
  display: flex;
  flex: 1;
  flex-direction: column;
  align-items: center;
  justify-content: space-between;
  padding: 4px 0;
  background: #f0f0f0;
`;

const tasks = [
  ["Test Project 1", "3", "Trial testing", "16h", "0d", "0d", "Wed 22/10/14", "Thu 23/10/14"],
  ["Test project 2", "3", "Trial testing", "16h", "0d", "0d", "Wed 22/10/14", "Thu 23/10/14"],
];
const taskAlign = ["left", "center", "left", "left", "right", "right", "right", "right"] as const;

const ResourceForm = () => (
  <FormPane onSubmit={e => e.preventDefault()}>
    <FormRow>
      <Label $w={28} htmlFor="name"><u>N</u>ame:</Label>
      <TextBox $w={137} id="name" defaultValue="Engineer" />
      <Label $w={30} $gap={5} htmlFor="initials">Initia<u>l</u>s:</Label>
      <TextBox $w={31} id="initials" defaultValue="E" />
      <Label $w={41} $gap={6} htmlFor="units">Max unit<u>s</u>:</Label>
      <TextBox $w={31} id="units" defaultValue="100%" />
      <Spinner>
        <SpinButton type="button" aria-label="Increase"><Icon w={4} h={3}><path d="M1 7L6 2L11 7Z" fill="#555" /></Icon></SpinButton>
        <SpinButton type="button" aria-label="Decrease"><Icon w={4} h={3}><path d="M1 2L6 7L11 2Z" fill="#555" /></Icon></SpinButton>
      </Spinner>
      <FormButton type="button" $gap={6}>P<u>r</u>evious</FormButton>
      <FormButton type="button" $gap={7} $primary>Ne<u>x</u>t</FormButton>
    </FormRow>
    <FormBlocks>
      <CostBox>
        <legend>Costs</legend>
        <Label $w={37} htmlFor="std">St<u>d</u> rate:</Label>
        <TextBox $w={52} id="std" defaultValue="£0.00/h" />
        <Label $w={41} $gap={6} htmlFor="per"><u>P</u>er use:</Label>
        <TextBox $w={66} id="per" defaultValue="£0.00" />
        <Label $w={37} htmlFor="ovt">Ovt r<u>a</u>te:</Label>
        <TextBox $w={52} id="ovt" defaultValue="£0.00/h" />
        <Label $w={41} $gap={6} htmlFor="accrue">Accr<u>u</u>e at:</Label>
        <SelectBox $w={66}><select id="accrue"><option>Prorated</option></select><Caret $color="#000" /></SelectBox>
      </CostBox>
      <DetailRows>
        <Label $w={37} htmlFor="base"><u>B</u>ase cal:</Label>
        <SelectBox $w={149}><select id="base"><option>Standard</option></select><Caret $color="#000" /></SelectBox>
        <Label $w={37} htmlFor="group"><u>G</u>roup:</Label>
        <TextBox $w={274} id="group" />
        <Label $w={37} htmlFor="code"><u>C</u>ode:</Label>
        <TextBox $w={274} id="code" />
      </DetailRows>
    </FormBlocks>
    <TaskArea>
      <TaskTable>
        <colgroup>
          {[54, 26, 134, 53, 52, 49, 74, 74].map((w, i) => <col key={i} width={w} />)}
        </colgroup>
        <thead>
          <tr>
            <TaskHead $left>Project</TaskHead>
            <TaskHead>ID</TaskHead>
            <TaskHead $left>Task Name</TaskHead>
            <TaskHead>Work</TaskHead>
            <TaskHead>Leveling Delay</TaskHead>
            <TaskHead>Delay</TaskHead>
            <TaskHead>Scheduled Start</TaskHead>
            <TaskHead>Scheduled Finish</TaskHead>
          </tr>
        </thead>
        <tbody>
          {tasks.map(row => (
            <tr key={row[0]}>{row.map((v, i) => <TaskCell key={i} $align={taskAlign[i]}>{v}</TaskCell>)}</tr>
          ))}
          <tr>{taskAlign.map((_, i) => <TaskCell key={i} />)}</tr>
        </tbody>
      </TaskTable>
      <TaskScroll>
        <ScrollTop>
          <Arrow dir="up" color="#111" />
          <Thumb $w={11} $h={11} $vertical />
        </ScrollTop>
        <Arrow dir="down" color="#111" />
      </TaskScroll>
    </TaskArea>
  </FormPane>
);

/* ---------- status bar ---------- */

const StatusBar = styled.footer`
  display: flex;
  align-items: center;
  flex: none;
  height: 17px;
  padding: 0 3px 0 6px;
  color: #333;
  border-top: 1px solid #8d8d8d;
  background: linear-gradient(to bottom, #e2e2e2, #c9c9c9 60%, #a9a9a9);
`;
const StatusText = styled.span<{ $w: number }>`
  display: flex;
  align-items: center;
  gap: 3px;
  width: ${p => p.$w}px;
  height: 11px;
  border-right: 1px solid #a2a2a2;
`;
const StatusTools = styled.div`
  display: flex;
  align-items: center;
  margin-left: auto;
  padding-left: 6px;
  border-left: 1px solid #9b9b9b;
`;
const StatusView = styled.button<{ $on?: boolean }>`
  display: flex;
  align-items: center;
  justify-content: center;
  width: 13px;
  height: 12px;
  ${p => p.$on && css`
    background: #ffe07a;
    border: 1px solid #c9952a;
  `}
`;
const ZoomSlider = styled.input`
  appearance: none;
  width: 71px;
  height: 10px;
  background: linear-gradient(#777, #777) center / 100% 1px no-repeat, linear-gradient(#777, #777) center / 1px 5px no-repeat;
  &::-webkit-slider-thumb { appearance: none; width: 1px; height: 5px; background: #777; }
`;
const ZoomDot = ({ plus }: { plus?: boolean }) => (
  <Icon w={11} h={11}>
    <circle cx="16" cy="16" r="14" fill="#e6e6e6" stroke="#999" strokeWidth="2" />
    <path d={plus ? "M9 16H23M16 9V23" : "M9 16H23"} stroke="#888" strokeWidth="2" />
  </Icon>
);
const PinSpace = styled.span`
  padding-left: 13px;
`;
const StatusPin = () => (
  <PinSpace>
    <Icon w={11} h={10}>
      <path d="M14 4L21 1L32 11L28 16L23 15L19 20L18 26L8 16L13 14L17 10Z" fill="#2c9a8d" />
      <path d="M12 20L2 29" stroke="#1d7468" strokeWidth="3" />
    </Icon>
  </PinSpace>
);

const Status = () => (
  <StatusBar>
    <StatusText $w={30}>Ready</StatusText>
    <StatusText $w={151}>
      <StatusPin />
      New Tasks : Manually Scheduled
    </StatusText>
    <StatusTools>
      <StatusView aria-label="Gantt view"><Icon w={9} h={8}><path d="M2 2H25V22H2Z" fill="#eee" stroke="#666" strokeWidth="2" /><path d="M5 8H12M10 13H18M15 18H22" stroke="#555" strokeWidth="2" /></Icon></StatusView>
      <StatusView aria-label="Usage view"><Icon w={9} h={8}><path d="M2 2H25V22H2Z" fill="#eee" stroke="#666" strokeWidth="2" /><path d="M9 2V22M12 8H22M12 13H22M12 18H22" stroke="#777" strokeWidth="2" /></Icon></StatusView>
      <StatusView aria-label="Planner view"><Icon w={9} h={8}><path d="M2 2H25V22H2Z" fill="#eee" stroke="#666" strokeWidth="2" /><path d="M5 12H12V17H5ZM15 7H22V12H15Z" fill="#777" /></Icon></StatusView>
      <StatusView $on aria-label="Sheet view"><Icon w={9} h={8}><path d="M2 2H25V22H2ZM2 9H25M2 15H25M9 2V22M17 2V22" fill="none" stroke="#7a5a1a" strokeWidth="2" /></Icon></StatusView>
      <PlainButton aria-label="Zoom out"><ZoomDot /></PlainButton>
      <ZoomSlider type="range" aria-label="Zoom" />
      <PlainButton aria-label="Zoom in"><ZoomDot plus /></PlainButton>
    </StatusTools>
  </StatusBar>
);

/* ---------- task bar ---------- */

const TaskBar = styled.footer`
  display: flex;
  align-items: center;
  flex: none;
  height: 28px;
  background: linear-gradient(to right, #25245f 0, #2b2a6c 460px, #2d4f8d 490px, #34599a 560px, #284a80 720px, #2b4d82 100%);
  border-top: 1px solid #17204a;
`;
const AppButton = styled.button<{ $w: number; $open?: boolean; $front?: boolean }>`
  display: flex;
  align-items: center;
  justify-content: center;
  flex: none;
  width: ${p => p.$w}px;
  height: 26px;
  ${p => p.$open && css`
    width: ${p.$w - 3}px;
    margin-right: 3px;
    border: 1px solid #9aa3c4;
    border-radius: 2px;
    background: linear-gradient(to bottom, #a3a5bd, #5d6092 45%, #45497f);
  `}
  ${p => p.$front && css`
    border-color: #e8ecf3;
    background: linear-gradient(to bottom, #d9dedb, #b7c2b7 50%, #8fa096);
  `}
`;
const Tray = styled.div`
  display: flex;
  align-items: center;
  gap: 6px;
  margin-left: auto;
`;
const ClockArea = styled.div`
  display: flex;
  align-items: center;
  margin-left: -4px;
`;
const Clock = styled.time`
  width: 60px;
  text-align: center;
  line-height: 12px;
  color: #fff;
`;
const ShowDesktop = styled.button`
  width: 10px;
  height: 26px;
  margin-right: 1px;
  border: 1px solid #6c83a8;
  background: #1e3862;
`;

const Windows = () => (
  <TaskBar>
    <AppButton $w={38} aria-label="Start">
      <Icon w={26} h={26}>
        <circle cx="39" cy="39" r="37" fill="#2f5a85" stroke="#8fb0cc" strokeWidth="3" />
        <path d="M5 38C8 16 24 5 39 4C56 5 70 17 73 38C50 30 28 30 5 38Z" fill="#8fb4c9" opacity="0.7" />
        <path d="M22 26Q30 21 37 25L35 37Q28 34 20 38Z" fill="#ee6a2c" />
        <path d="M40 26Q48 30 57 26L54 39Q46 42 38 38Z" fill="#8cc63e" />
        <path d="M19 41Q27 37 34 41L32 53Q25 49 16 54Z" fill="#4aa7e8" />
        <path d="M37 42Q45 46 53 42L51 55Q43 58 35 54Z" fill="#fcc62e" />
      </Icon>
    </AppButton>
    <AppButton $w={48} aria-label="Internet Explorer">
      <Icon w={21} h={20}>
        <path d="M50 40C45 55 18 58 14 35C12 14 48 8 52 32H26" fill="none" stroke="#4db2ea" strokeWidth="9" />
        <path d="M4 54C-2 40 30 6 60 5C54 8 20 26 9 52Z" fill="#f4c444" />
      </Icon>
    </AppButton>
    <AppButton $w={44} $open aria-label="Explorer">
      <Icon w={24} h={20}>
        <path d="M4 8H24L28 13H66V54H4Z" fill="#e6c566" />
        <path d="M14 4H30V14H14ZM38 5H58V14H38Z" fill="#f6efca" />
        <path d="M4 18H68V50H4Z" fill="#f6e3a1" />
        <path d="M14 59V40H56V59H46V49H24V59Z" fill="#79b9e2" stroke="#4b8fc0" />
      </Icon>
    </AppButton>
    <AppButton $w={38} aria-label="Media Player">
      <Icon w={18} h={18}>
        <path d="M16 4H52V50H16Z" fill="#4d89b8" />
        <path d="M2 8H42V48H2Z" fill="#a9cde6" stroke="#5b94bd" strokeWidth="2" />
        <circle cx="25" cy="28" r="16" fill="#e97e25" stroke="#fbd6a4" strokeWidth="3" />
        <path d="M20 19L35 28L20 37Z" fill="#fff" />
      </Icon>
    </AppButton>
    <AppButton $w={50} aria-label="Word">
      <Icon w={21} h={18}>
        <path d="M30 8H60V48H30Z" fill="#fff" stroke="#2b579a" strokeWidth="2" />
        <path d="M38 16H56M38 23H56M38 30H56M38 37H56" stroke="#2b579a" strokeWidth="3" />
        <path d="M2 6L36 0V54L2 48Z" fill="#2b579a" />
        <text x="5" y="37" fontSize="28" fontWeight="700" fill="#fff" fontFamily="Liberation Sans">W</text>
      </Icon>
    </AppButton>
    <AppButton $w={42} aria-label="Excel">
      <Icon w={21} h={18}>
        <path d="M30 8H60V48H30Z" fill="#fff" stroke="#217346" strokeWidth="2" />
        <path d="M38 16H56M38 23H56M38 30H56M38 37H56M47 10V46" stroke="#217346" strokeWidth="3" />
        <path d="M2 6L36 0V54L2 48Z" fill="#217346" />
        <text x="8" y="37" fontSize="28" fontWeight="700" fill="#fff" fontFamily="Liberation Sans">X</text>
      </Icon>
    </AppButton>
    <AppButton $w={44} $open aria-label="Outlook">
      <Icon w={22} h={22}>
        <path d="M30 14H62V46H30Z" fill="#fff" stroke="#2a77c0" strokeWidth="2" />
        <path d="M38 30L44 37L56 22" stroke="#2a6ebb" strokeWidth="4" fill="none" />
        <path d="M2 7L36 1V59L2 52Z" fill="#0f6fc2" />
        <text x="6" y="40" fontSize="28" fontWeight="700" fill="#fff" fontFamily="Liberation Sans">O</text>
        <path d="M36 42H66V64H36Z" fill="#f2d69a" stroke="#c79e55" strokeWidth="2" />
        <path d="M36 42L51 54L66 42" stroke="#c79e55" strokeWidth="2" fill="none" />
      </Icon>
    </AppButton>
    <AppButton $w={43} $open aria-label="Chrome">
      <Icon w={21} h={21}>
        <circle cx="31" cy="31" r="30" fill="#f7c92d" />
        <path d="M31 1A30 30 0 0 1 57 16H31A15 15 0 0 0 17 37L5 16A30 30 0 0 1 31 1Z" fill="#dc4133" />
        <path d="M5 16L18 38A15 15 0 0 0 34 46L29 61A30 30 0 0 1 5 16Z" fill="#2ea24a" />
        <circle cx="31" cy="31" r="14" fill="#fff" />
        <circle cx="31" cy="31" r="10" fill="#3f7fdc" />
      </Icon>
    </AppButton>
    <AppButton $w={44} $open aria-label="Server manager">
      <Icon w={22} h={22}>
        <path d="M34 2H56V13H34Z" fill="#3a7fc8" />
        <path d="M34 2V26" stroke="#223" strokeWidth="3" />
        <path d="M4 34L16 24L28 34V62H4Z" fill="#4596de" />
        <path d="M22 26L42 17L62 30V60L28 64V34Z" fill="#26364f" />
        <path d="M10 44H20V62H10Z" fill="#17375e" />
        <path d="M36 34H42V44H36ZM48 34H54V44H48ZM40 50H50V62H40Z" fill="#5b93cc" />
      </Icon>
    </AppButton>
    <AppButton $w={42} $open $front aria-label="Project">
      <Icon w={21} h={22}>
        <path d="M4 6L40 2V60L4 55Z" fill="#4f7f2c" />
        <path d="M36 8H60V54H36Z" fill="#e9f2df" stroke="#6f9a4a" strokeWidth="2" />
        <text x="8" y="42" fontSize="38" fontWeight="700" fill="#fff" fontFamily="Liberation Sans">P</text>
        <path d="M30 42H44V34L60 46L48 62L46 54H30Z" fill="#fff" stroke="#6f8a5c" strokeWidth="2" />
      </Icon>
    </AppButton>
    <AppButton $w={44} $open aria-label="Recorder">
      <Icon w={22} h={22}>
        <path d="M4 4H24V40H4Z" fill="none" stroke="#4e9a50" strokeWidth="6" />
        <path d="M22 6H50V34H22Z" fill="none" stroke="#e4bf3c" strokeWidth="6" />
        <path d="M8 28H34V48H8Z" fill="none" stroke="#3a7ac0" strokeWidth="6" />
        <circle cx="48" cy="47" r="16" fill="#d42020" />
        <circle cx="43" cy="41" r="5" fill="#f48b80" />
      </Icon>
    </AppButton>
    <Tray>
      <Arrow dir="up" color="#fff" />
      <Icon w={11} h={12}><path d="M12 8L30 2V18L20 32L4 30L2 18Z" fill="#279a3c" /><path d="M9 20L15 27L26 12" stroke="#fff" strokeWidth="4" fill="none" /></Icon>
      <Icon w={11} h={10}><path d="M9 1L16 6L9 11L2 6ZM23 1L30 6L23 11L16 6ZM9 11L16 16L9 21L2 16ZM23 11L30 16L23 21L16 16ZM16 19L23 24L16 29L9 24Z" fill="#9fd3f5" /></Icon>
      <Icon w={11} h={10}><path d="M4 12C8 2 22 2 26 8M28 18C24 28 10 28 6 22" fill="none" stroke="#fff" strokeWidth="4" /><path d="M29 1V12H19ZM3 29V18H13Z" fill="#fff" /></Icon>
      <Icon w={11} h={11}><path d="M4 2V31" stroke="#fff" strokeWidth="3" /><path d="M6 4H16L18 8H30V20H18L15 17H6Z" fill="#fff" /></Icon>
      <Icon w={11} h={11}><path d="M10 8H31V23H10Z" fill="#3a5a90" stroke="#fff" strokeWidth="3" /><path d="M2 3H10V9H2ZM6 9V29H26M20 23V29" stroke="#fff" strokeWidth="2" fill="none" /></Icon>
      <Icon w={10} h={10}><path d="M2 11H8L16 3V27L8 19H2Z" fill="#fff" /><path d="M20 9Q24 15 20 21M25 5Q31 15 25 25" stroke="#fff" strokeWidth="2" fill="none" /></Icon>
      <Icon w={11} h={10}><path d="M11 2H21L32 20H22Z" fill="#f5c53a" /><path d="M11 2L1 20L6 28L16 11Z" fill="#2e9a58" /><path d="M11 20H32L27 28H6Z" fill="#4a83e0" /></Icon>
      <ClockArea>
        <Clock>10:01<br />17/10/2014</Clock>
        <ShowDesktop aria-label="Show desktop" />
      </ClockArea>
    </Tray>
  </TaskBar>
);

export default function App() {
  return (
    <>
      <GlobalStyle />
      <Stage>
        <TitleBar />
        <Ribbon />
        <Workspace>
          <Views />
          <Panes>
            <ResourceSheet />
            <Splitter />
            <ResourceForm />
          </Panes>
        </Workspace>
        <Status />
        <Windows />
      </Stage>
    </>
  );
}
